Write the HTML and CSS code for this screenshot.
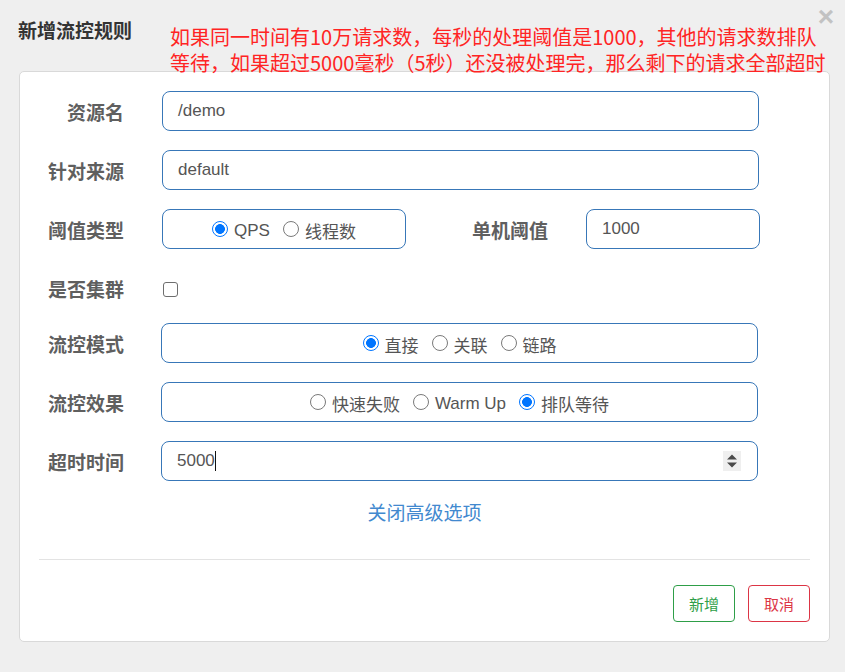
FILE: index.html
```html
<!DOCTYPE html>
<html lang="zh">
<head>
<meta charset="utf-8">
<title>新增流控规则</title>
<link rel="stylesheet" href="styles.css">
</head>
<body>
<div class="dialog">
  <div class="header">
    <div class="title">新增流控规则</div>
    <div class="close">×</div>
    <div class="note">
      <div class="note-line">如果同一时间有10万请求数，每秒的处理阈值是1000，其他的请求数排队</div>
      <div class="note-line">等待，如果超过5000毫秒（5秒）还没被处理完，那么剩下的请求全部超时</div>
    </div>
  </div>
  <div class="panel">
    <div class="row">
      <div class="label">资源名</div>
      <div class="field wide">/demo</div>
    </div>
    <div class="row">
      <div class="label">针对来源</div>
      <div class="field wide">default</div>
    </div>
    <div class="row">
      <div class="label">阈值类型</div>
      <div class="field group short">
        <label class="opt"><input type="radio" name="t" checked>QPS</label>
        <label class="opt"><input type="radio" name="t">线程数</label>
      </div>
      <div class="label label2">单机阈值</div>
      <div class="field small">1000</div>
    </div>
    <div class="row row-check">
      <div class="label">是否集群</div>
      <input class="check" type="checkbox">
    </div>
    <div class="row">
      <div class="label">流控模式</div>
      <div class="field group wide shift">
        <label class="opt"><input type="radio" name="m" checked>直接</label>
        <label class="opt"><input type="radio" name="m">关联</label>
        <label class="opt"><input type="radio" name="m">链路</label>
      </div>
    </div>
    <div class="row">
      <div class="label">流控效果</div>
      <div class="field group wide shift">
        <label class="opt"><input type="radio" name="e">快速失败</label>
        <label class="opt"><input type="radio" name="e">Warm Up</label>
        <label class="opt"><input type="radio" name="e" checked>排队等待</label>
      </div>
    </div>
    <div class="row">
      <div class="label">超时时间</div>
      <div class="field wide shift number">5000<span class="caret"></span>
        <span class="spinner">
          <svg width="18" height="20" viewBox="0 0 18 20"><path d="M4 8.5 L9 3.5 L14 8.5 Z M4 11.5 L9 16.5 L14 11.5 Z" fill="#4a4a4a"/></svg>
        </span>
      </div>
    </div>
    <div class="more">关闭高级选项</div>
    <div class="divider"></div>
    <div class="actions">
      <button class="btn btn-add">新增</button>
      <button class="btn btn-cancel">取消</button>
    </div>
  </div>
</div>
</body>
</html>
```

FILE: styles.css
```css
html, body {
  margin: 0;
  padding: 0;
  background: #efefef;
}
body {
  font-family: "Liberation Sans", "Noto Sans CJK SC", sans-serif;
  width: 845px;
  height: 672px;
  overflow: hidden;
}
.dialog {
  position: relative;
}
.header {
  position: relative;
  height: 71px;
}
.title {
  position: absolute;
  left: 18px;
  top: 18px;
  font-family: "Noto Sans CJK SC", sans-serif;
  font-weight: bold;
  font-size: 19px;
  line-height: 24px;
  color: #333;
}
.close {
  position: absolute;
  right: 11px;
  top: 2px;
  font-family: "Liberation Sans", sans-serif;
  font-size: 28px;
  font-weight: bold;
  line-height: 30px;
  color: #c2c2c2;
}
.note {
  position: absolute;
  left: 170px;
  top: 24px;
  font-family: "Noto Sans CJK SC", sans-serif;
  font-size: 20px;
  color: #ff2424;
  white-space: nowrap;
}
.note-line {
  height: 26px;
  line-height: 26px;
}
.panel {
  margin-left: 19px;
  width: 809px;
  background: #fff;
  border: 1px solid #d9d9d9;
  border-radius: 5px;
  padding: 19px 0 19px 0;
}
.row {
  display: flex;
  align-items: center;
  height: 40px;
  margin-bottom: 19px;
}
.row-check {
  margin-bottom: 15px;
}
.label {
  width: 104px;
  margin-right: 38px;
  text-align: right;
  font-family: "Noto Sans CJK SC", sans-serif;
  font-weight: bold;
  font-size: 19px;
  color: #5f5f5f;
}
.label2 {
  margin-left: 38px;
  width: 104px;
}
.field {
  box-sizing: border-box;
  height: 40px;
  border: 1px solid #3877b8;
  border-radius: 8px;
  padding: 0 15px;
  display: flex;
  align-items: center;
  font-size: 17px;
  color: #555;
}
.wide {
  width: 597px;
}
.shift {
  margin-left: -1px;
}
.short {
  width: 244px;
}
.small {
  width: 174px;
}
.group {
  justify-content: center;
  padding: 0 10px;
  gap: 13px;
}
.opt {
  display: flex;
  align-items: center;
  font-size: 17px;
  color: #555;
  padding-top: 3px;
}
.opt input {
  appearance: none;
  -webkit-appearance: none;
  box-sizing: border-box;
  width: 16px;
  height: 16px;
  margin: 0 6px 0 0;
  border: 1px solid #7a7a7a;
  border-radius: 50%;
  background: #fff;
  position: relative;
  top: -2px;
}
.opt input:checked {
  border: 1.5px solid #0075ff;
  background: radial-gradient(circle, #0075ff 0 4.6px, #fff 5.2px);
}
.check {
  appearance: none;
  -webkit-appearance: none;
  box-sizing: border-box;
  width: 15px;
  height: 15px;
  margin: 2px 0 0 1px;
  border: 1px solid #6e6e6e;
  border-radius: 3px;
  background: #fff;
}
.number {
  position: relative;
}
.caret {
  display: inline-block;
  width: 1px;
  height: 20px;
  background: #111;
}
.spinner {
  position: absolute;
  right: 16px;
  top: 9px;
  width: 18px;
  height: 20px;
  background: #efefef;
  display: flex;
}
.more {
  text-align: center;
  font-family: "Noto Sans CJK SC", sans-serif;
  font-size: 19px;
  line-height: 24px;
  color: #4289cf;
}
.divider {
  margin: 35px 19px 0 19px;
  height: 1px;
  background: #e3e3e3;
}
.actions {
  display: flex;
  justify-content: flex-end;
  gap: 13px;
  margin: 25px 19px 0 0;
}
.btn {
  box-sizing: border-box;
  height: 37px;
  width: 62px;
  background: #fff;
  border-radius: 4px;
  font-family: "Noto Sans CJK SC", sans-serif;
  font-size: 15px;
  padding: 0;
}
.btn-add {
  border: 1px solid #2e9e48;
  color: #2e9e48;
}
.btn-cancel {
  border: 1px solid #dc3545;
  color: #dc3545;
}
```
